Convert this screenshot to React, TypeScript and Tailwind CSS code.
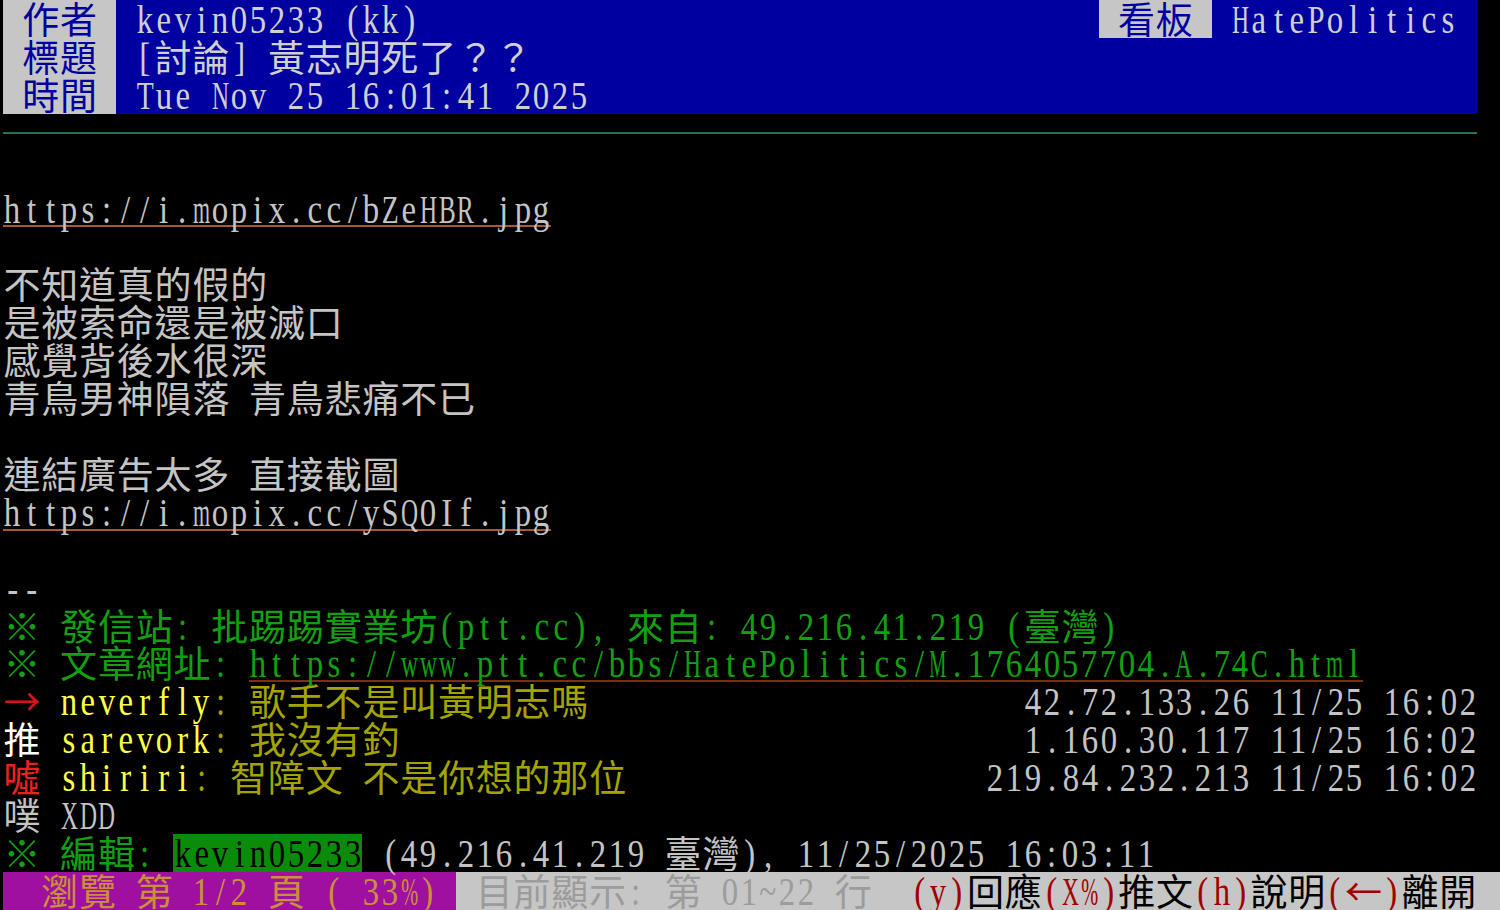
import React from "react";

const isWide = (ch: string) => (ch.codePointAt(0) ?? 0) > 0x7f;
const widthOf = (s: string) => Array.from(s).reduce((a, ch) => a + (isWide(ch) ? 2 : 1), 0);
const pad = (s: string, n: number) => s + " ".repeat(Math.max(0, n - widthOf(s)));

let ctx: CanvasRenderingContext2D | null = null;
const cache: Record<string, number> = {};
function scaleFor(ch: string): number {
  if (cache[ch] !== undefined) return cache[ch];
  let s = 0.8;
  try {
    if (!ctx) ctx = document.createElement("canvas").getContext("2d");
    if (ctx) {
      ctx.font = "40px 'Liberation Serif'";
      const w = ctx.measureText(ch).width;
      if (w > 0) s = Math.min(0.82, 17 / w);
    }
  } catch {
    s = 0.8;
  }
  cache[ch] = s;
  return s;
}

function Cells({ text }: { text: string }) {
  return (
    <>
      {Array.from(text).map((ch, i) =>
        isWide(ch) ? (
          <span
            key={i}
            className="w-[37.8px] shrink-0 text-center text-[37px] font-['Noto_Sans_CJK_TC',sans-serif]"
          >
            {ch}
          </span>
        ) : (
          <span key={i} className="w-[18.9px] shrink-0 flex justify-center">
            {ch !== " " && (
              <span
                className="inline-block translate-y-[1px] text-[40px] font-['Liberation_Serif',serif]"
                style={{ transform: `scaleX(${scaleFor(ch)})` }}
              >
                {ch}
              </span>
            )}
          </span>
        )
      )}
    </>
  );
}

function S({ t, c }: { t: string; c: string }) {
  return (
    <span className={`flex ${c}`}>
      <Cells text={t} />
    </span>
  );
}

function Row({ children }: { children?: React.ReactNode }) {
  return <div className="flex h-[37.92px] leading-[37.92px] whitespace-pre">{children}</div>;
}

const LABEL = "text-[#0000a0] bg-[#c6c6c6]";
const HEAD = "text-[#d0d0d0] bg-[#0000a0]";
const BODY = "text-[#c4c4c4]";
const URL = "text-[#c4c4c4] shadow-[inset_0_-2px_0_#a85a30]";
const GREEN = "text-[#12a012]";
const GURL = "text-[#12a012] shadow-[inset_0_-2px_0_#7a2e12]";
const YEL = "text-[#ffff48]";
const OLIVE = "text-[#a4a400]";

function Push({ tag, tagC, user, msg, right }: { tag: string; tagC: string; user: string; msg: string; right: string }) {
  return (
    <Row>
      <div className="flex w-[1474.2px] justify-between">
        <div className="flex">
          <S t={tag + " "} c={tagC} />
          <S t={user} c={YEL} />
          <S t={msg} c={OLIVE} />
        </div>
        <S t={right} c={BODY} />
      </div>
    </Row>
  );
}

export default function App() {
  return (
    <div className="w-[1500px] h-[910px] overflow-hidden bg-black pl-[3px]">
      <Row>
        <S t=" 作者 " c={LABEL} />
        <S t={pad(" kevin05233 (kk)", 52)} c={HEAD} />
        <S t=" 看板 " c={LABEL} />
        <S t=" HatePolitics " c={HEAD} />
      </Row>
      <Row>
        <S t=" 標題 " c={LABEL} />
        <S t={pad(" [討論] 黃志明死了？？", 72)} c={HEAD} />
      </Row>
      <Row>
        <S t=" 時間 " c={LABEL} />
        <S t={pad(" Tue Nov 25 16:01:41 2025", 72)} c={HEAD} />
      </Row>
      <Row>
        <div className="flex w-[1474.2px] items-center">
          <div className="h-[2px] w-full bg-[#256f5a]" />
        </div>
      </Row>
      <Row />
      <Row>
        <S t="https://i.mopix.cc/bZeHBR.jpg" c={URL} />
      </Row>
      <Row />
      <Row>
        <S t="不知道真的假的" c={BODY} />
      </Row>
      <Row>
        <S t="是被索命還是被滅口" c={BODY} />
      </Row>
      <Row>
        <S t="感覺背後水很深" c={BODY} />
      </Row>
      <Row>
        <S t="青鳥男神隕落 青鳥悲痛不已" c={BODY} />
      </Row>
      <Row />
      <Row>
        <S t="連結廣告太多 直接截圖" c={BODY} />
      </Row>
      <Row>
        <S t="https://i.mopix.cc/ySQ0If.jpg" c={URL} />
      </Row>
      <Row />
      <Row>
        <S t="--" c={BODY} />
      </Row>
      <Row>
        <S t="※ 發信站: 批踢踢實業坊(ptt.cc), 來自: 49.216.41.219 (臺灣)" c={GREEN} />
      </Row>
      <Row>
        <S t="※ 文章網址: " c={GREEN} />
        <S t="https://www.ptt.cc/bbs/HatePolitics/M.1764057704.A.74C.html" c={GURL} />
      </Row>
      <Push tag="→" tagC="text-[#d01818]" user="neverfly" msg=": 歌手不是叫黃明志嗎" right="42.72.133.26 11/25 16:02" />
      <Push tag="推" tagC="text-[#ffffff]" user="sarevork" msg=": 我沒有釣" right="1.160.30.117 11/25 16:02" />
      <Push tag="噓" tagC="text-[#f02020]" user="shiriri" msg=": 智障文 不是你想的那位" right="219.84.232.213 11/25 16:02" />
      <Row>
        <S t="噗 XDD" c={BODY} />
      </Row>
      <Row>
        <S t="※ 編輯: " c={GREEN} />
        <S t="kevin05233" c="text-black bg-[#0a8c0a]" />
        <S t=" (49.216.41.219 臺灣), 11/25/2025 16:03:11" c={BODY} />
      </Row>
      <Row>
        <S t="  瀏覽 第 1/2 頁 ( 33%) " c="text-[#c8903c] bg-[#a010a0]" />
        <S t=" 目前顯示: 第 01~22 行  " c="text-[#9c9c9c] bg-[#c6c6c6]" />
        <S t="(y)" c="text-[#a00000] bg-[#c6c6c6]" />
        <S t="回應" c="text-black bg-[#c6c6c6]" />
        <S t="(X%)" c="text-[#a00000] bg-[#c6c6c6]" />
        <S t="推文" c="text-black bg-[#c6c6c6]" />
        <S t="(h)" c="text-[#a00000] bg-[#c6c6c6]" />
        <S t="說明" c="text-black bg-[#c6c6c6]" />
        <S t="(←)" c="text-[#a00000] bg-[#c6c6c6]" />
        <S t="離開" c="text-black bg-[#c6c6c6]" />
        <S t="    " c="text-black bg-[#c6c6c6]" />
      </Row>
    </div>
  );
}
